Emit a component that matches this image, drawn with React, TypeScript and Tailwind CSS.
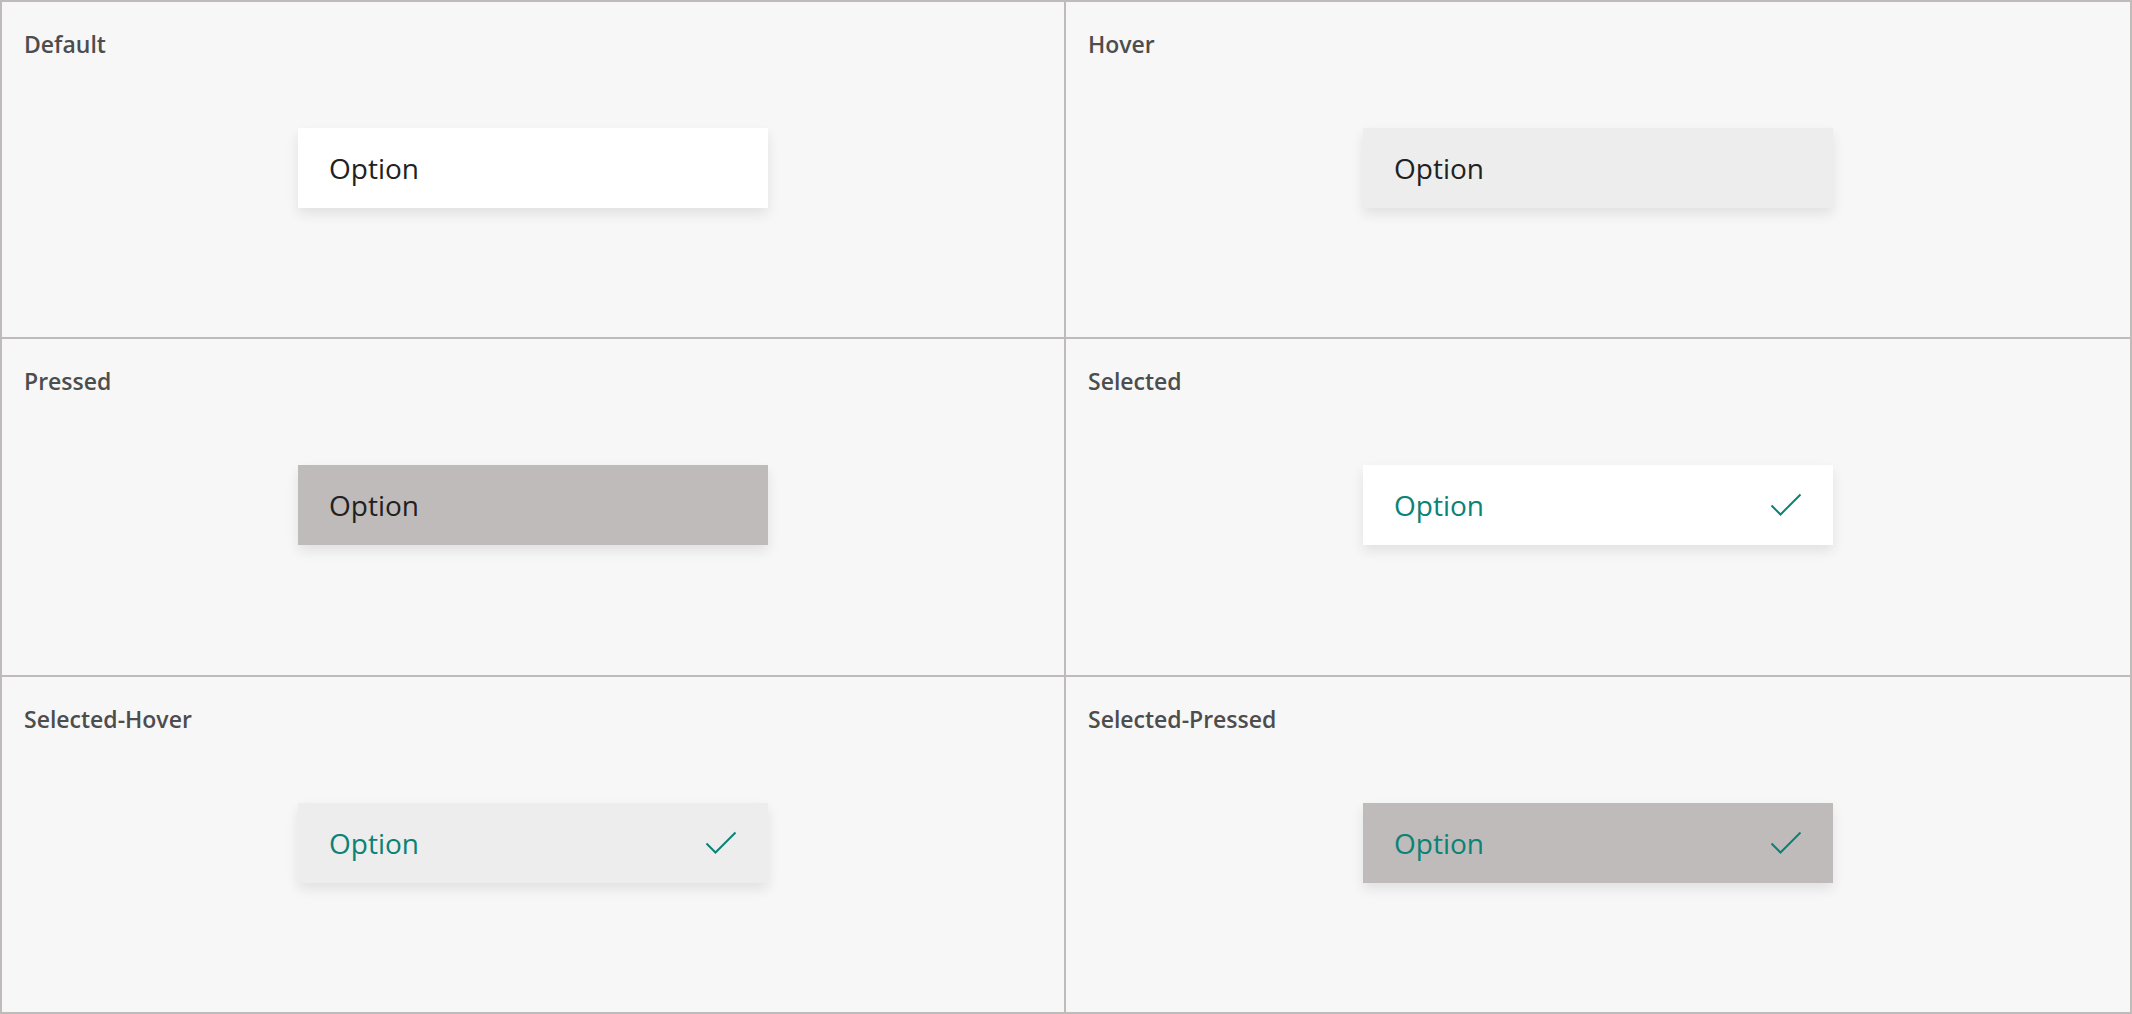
import React from 'react';

type State = {
    label: string;
    bg: string;
    selected?: boolean;
};

const states: State[] = [
    { label: 'Default', bg: 'bg-white' },
    { label: 'Hover', bg: 'bg-[#ededed]' },
    { label: 'Pressed', bg: 'bg-[#bfbbba]' },
    { label: 'Selected', bg: 'bg-white', selected: true },
    { label: 'Selected-Hover', bg: 'bg-[#ededed]', selected: true },
    { label: 'Selected-Pressed', bg: 'bg-[#bfbbba]', selected: true },
];

const Check = () => (
    <svg width="32" height="24" viewBox="0 0 32 24" fill="none" className="shrink-0">
        <path d="M1.5 12.5 L10.5 21.5 L30.5 1.5" stroke="#0b8276" strokeWidth="2" />
    </svg>
);

const OptionItem: React.FC<{ state: State }> = ({ state }) => (
    <div
        className={`${state.bg} w-[470px] h-[80px] flex items-center justify-between pl-[31px] pr-[31px] shadow-[0_6px_12px_rgba(0,0,0,0.09)]`}
    >
        <span className={`text-[28px] leading-none ${state.selected ? 'text-[#0b8276]' : 'text-[#212121]'}`}>
            Option
        </span>
        {state.selected && <Check />}
    </div>
);

export default function App() {
    return (
        <div
            className="w-[2132px] h-[1014px] bg-[#bfbbba] p-[2px] grid grid-cols-[1062px_1064px] grid-rows-3 gap-[2px]"
            style={{ fontFamily: '"Open Sans", "Noto Sans", sans-serif' }}
        >
            {states.map((s) => (
                <div key={s.label} className="bg-[#f7f7f7] grid">
                    <div className="[grid-area:1/1] self-start justify-self-start pl-[22px] pt-[31px] text-[23px] leading-none font-semibold text-[#4d4d4d]">
                        {s.label}
                    </div>
                    <div className="[grid-area:1/1] self-center justify-self-center mb-[3px]">
                        <OptionItem state={s} />
                    </div>
                </div>
            ))}
        </div>
    );
}
